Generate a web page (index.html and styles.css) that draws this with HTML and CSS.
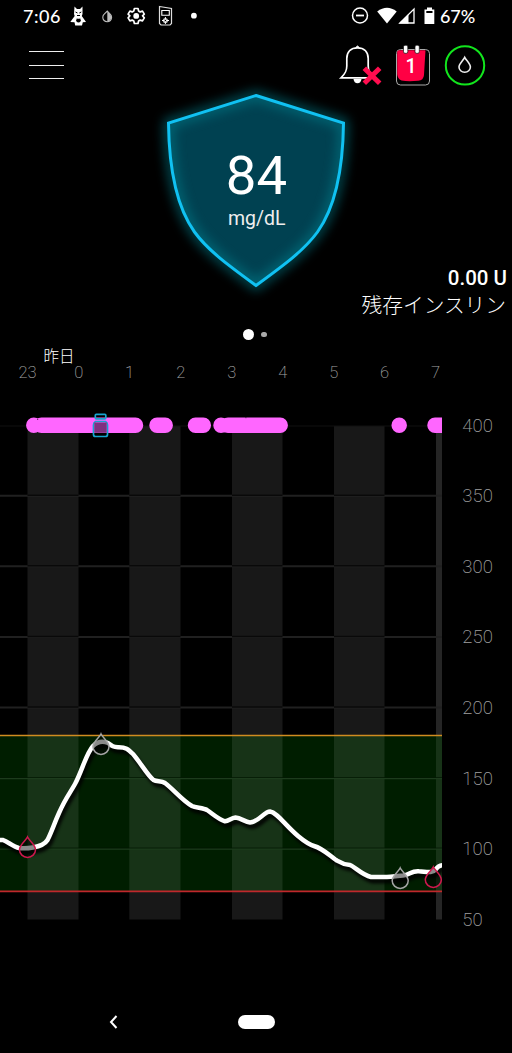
FILE: index.html
```html
<!DOCTYPE html>
<html lang="ja">
<head>
<meta charset="utf-8">
<title>Glucose</title>
<link rel="stylesheet" href="styles.css">
</head>
<body>
<div class="screen">
  <div class="status">
    <span class="clock">7:06</span>
    <svg class="status-icons" width="140" height="32" viewBox="66 0 140 32">
      <path d="M74.500 6.500L77 9H80L82.500 6.500V14L81.800 16L86 22L82.800 22.300L82 25.500H75.200L74.500 22.300L70.300 22L74.700 16L74 14Z" fill="#fff"/>
      <path d="M75.500 12L77.500 13M81.300 12L79.300 13M77 15.500H80" stroke="#000" stroke-width="1"/>
      <circle cx="78.500" cy="20.200" r="2.300"/>
      <path d="M78.500 17.200l1.600 1.500h-3.200z" fill="#fff"/>
      <path d="M107.300 11L110.200 14.200A4.400 4.400 0 1 1 104.200 14.200Z" fill="none" stroke="#bbb" stroke-width="1.100"/>
      <path d="M107.300 11L110.200 14.200A4.400 4.400 0 0 1 107.300 21.500Z" fill="#bbb"/>
      <path d="M134.400 8.500h3.600l.6 2.500 1.600.9 2.300-.8 1.800 3-1.800 1.700v0l1.800 2.100-1.800 3-2.300-.8-1.600.9-.6 2.500h-3.600l-.6-2.500-1.600-.9-2.300.8-1.800-3 1.800-2.100-1.800-1.700 1.800-3 2.300.8 1.600-.9z" fill="none" stroke="#fff" stroke-width="1.700" stroke-linejoin="round"/>
      <circle cx="136.200" cy="15.900" r="2.900" fill="#fff"/>
      <path d="M159.500 6.500L171.500 8.500V23.500L170 25H161L159.500 23.500Z" fill="none" stroke="#ddd" stroke-width="1.200"/>
      <path d="M161.800 10.500h7.500v4.800h-7.500z" fill="none" stroke="#fff" stroke-width="1.100"/>
      <circle cx="165.400" cy="20.500" r="2.600" fill="#bbb"/>
      <path d="M165.400 17v7M162 20.500h7" stroke="#fff"/>
      <circle cx="165.400" cy="20.500" r=".8"/>
      <circle cx="193.900" cy="15.700" r="2.900" fill="#fff"/>
    </svg>
    <svg class="status-signal" width="90" height="32" viewBox="350 0 90 32">
      <circle cx="360" cy="15.500" r="7.500" fill="none" stroke="#fff" stroke-width="1.500"/>
      <path d="M356 15.500h8" stroke="#fff" stroke-width="1.800"/>
      <path d="M377.200 11.500Q387 4 396.700 11.500L387 23.500Z" fill="#fff"/>
      <path d="M399.800 23H414V9Z" fill="none" stroke="#fff" stroke-width="1.300"/>
      <path d="M399 23.500L408.500 14V23.500Z" fill="#fff"/>
      <path d="M427 7.500h5v2h2.300V24H424.500V9.500H427Z" fill="#fff"/>
      <path d="M426.300 11h6.200v2h-6.200z"/>
    </svg>
    <span class="battery">67%</span>
  </div>

  <div class="toolbar">
    <div class="menu"><i></i><i></i><i></i></div>
    <svg width="150" height="48" viewBox="336 42 150 48">
      <path d="M341 77.800C345.500 73.500 346.800 71 346.800 66V58.500C346.800 51.500 351 47.800 357.500 47.800S368.200 51.500 368.200 58.500V66C368.200 71 369.500 73.500 374 77.800Z" fill="none" stroke="#fff" stroke-width="1.700"/>
      <path d="M355.800 47.500Q357.500 44.500 359.200 47.500Z" fill="#fff" stroke="#fff"/>
      <path d="M353.500 79h8q-.6 4.200-4 4.200t-4-4.200z" fill="#fff"/>
      <path d="M364.300 68.300L379.700 83.300M379.700 68.300L364.300 83.300" stroke="#ff0d4f" stroke-width="5"/>
      <rect x="396.500" y="49.500" width="33" height="35.500" rx="4" fill="#000" stroke="#aaa"/>
      <path d="M399 50.300H425.500Q424.500 66 424 75Q423.500 80.800 418 80.700Q408 81.700 401.500 80.400Q397.500 79 397.200 74V52Q397.200 50.300 399 50.300Z" fill="#ff0044"/>
      <rect x="403.500" y="45.300" width="4.300" height="8" rx="1.500" fill="#fff" stroke="#111" stroke-width=".7"/>
      <rect x="415" y="45.300" width="4.300" height="8" rx="1.500" fill="#fff" stroke="#111" stroke-width=".7"/>
      <text class="day" x="411" y="72.700">1</text>
      <circle cx="465" cy="65.400" r="19.200" fill="none" stroke="#12e51d" stroke-width="2"/>
      <path d="M464.700 57.300C463 60.800 459 63.800 459 67A5.700 5.300 0 0 0 470.400 67C470.400 63.800 466.500 60.800 464.700 57.300Z" fill="none" stroke="#eee" stroke-width="1.600"/>
    </svg>
  </div>

  <div class="hero">
    <svg class="shield" width="212" height="210" viewBox="150 90 212 210">
      <defs><filter id="glow" x="-20%" y="-20%" width="140%" height="140%"><feGaussianBlur stdDeviation="6"/></filter></defs>
      <path d="M256 95.500L343.500 123C343 168 336 206 317.500 232C304 250.500 284 265 256 285.500C228 265 208 250.500 194.500 232C176 206 169 168 168.500 123Z" fill="#004151"/>
      <path d="M256 95.500L343.500 123C343 168 336 206 317.500 232C304 250.500 284 265 256 285.500C228 265 208 250.500 194.500 232C176 206 169 168 168.500 123Z" fill="none" stroke="#008290" stroke-width="9" opacity=".65" filter="url(#glow)"/>
      <path d="M256 95.500L343.500 123C343 168 336 206 317.500 232C304 250.500 284 265 256 285.500C228 265 208 250.500 194.500 232C176 206 169 168 168.500 123Z" fill="none" stroke="#10c1f2" stroke-width="3"/>
      <text class="glucose" x="256.500" y="193.500">84</text>
      <text class="unit" x="256.800" y="224.500">mg/dL</text>
    </svg>
  </div>

  <div class="insulin">
    <div class="amount">0.00 U</div>
    <div class="caption">残存インスリン</div>
  </div>
  <div class="pager"><i class="current"></i><i></i></div>

  <svg class="chart" width="512" height="590" viewBox="0 342 512 590">
    <defs>
      <clipPath id="plot"><path d="M0 400H442V930H0Z"/></clipPath>
      <filter id="shade" x="-5%" y="-10%" width="110%" height="130%"><feGaussianBlur stdDeviation="1.700"/></filter>
      <path id="drop" d="M0-11.500C-1.500-8-8-4-8 1.200A8 7.700 0 0 0 8 1.200C8-4 1.500-8 0-11.500Z"/>
      <path id="trend" d="M-2 840L3 840C8 842 14 847 19 848C24 848.700 27 848.500 33 847.500C41 846 45 844 47.500 840C52 831 54 824 59 813C65 799 70 793 75 784C82 771 86 754 93 746C98 741 103 741 108 743C112 746 113 747 118 747.200C126 747 128 749 133 754C140 762 148 776 153.500 780C157 782 161 780.500 165 783C173 789 183 801 192 806C196 808 203 807.500 207 810C213 814 218 819 225 821.300C229 821 231 818 235.500 817.600C241 818 245 822 250 822.500C259 822 264 811.500 270 811.500C277 812.500 285 825 298 836C304 841 309 844.500 314 846C323 848.500 330 856 336 860C341 863 343 864.500 350 865C355 867 362 875 371 877H387C394 876.500 399 875.500 403 875.500C410 875 411 870.500 419 871.200C426 871.500 432 874 436 869C438 866 440 865 444 865"/>
    </defs>
    <path d="M27.500 426H78.500V919.500H27.500ZM129.300 426H180.500V919.500H129.300ZM232 426H282.500V919.500H232ZM334 426H384.500V919.500H334Z" fill="#181818"/>
    <path d="M436 426H442V919.500H436Z" fill="#252525"/>
    <path d="M0 426H442" stroke="#111"/>
    <path d="M0 495.700H442M0 566.300H442M0 637H442M0 707.600H442M0 778.300H442M0 849H442" stroke="#202020" stroke-width="2"/>
    <path d="M27.500 495.200h51m50.800 0h51.200m51.500 0h50.500m51.500 0h50.500M27.500 565.800h51m50.800 0h51.200m51.500 0h50.500m51.500 0h50.500M27.500 636.500h51m50.800 0h51.200m51.500 0h50.500m51.500 0h50.500M27.500 707.100h51m50.800 0h51.200m51.500 0h50.500m51.500 0h50.500" stroke="#090909" stroke-width="1.500"/>
    <path d="M0 736H442V891H0Z" fill="#001e00"/>
    <path d="M27.500 736h51v155h-51zM129.300 736h51.200v155h-51.200zM232 736h50.500v155H232zM334 736h50.500v155H334zM436 736h6v155h-6z" fill="#173317"/>
    <path d="M0 778.500H442M0 849H442" stroke="#1d3c1d" stroke-width="1.500"/>
    <path d="M0 777.500H442M0 848H442" stroke="#001500" stroke-width=".7"/>
    <path d="M0 735.600H442" stroke="#d08c20" stroke-width="1.500"/>
    <path d="M0 891.400H442" stroke="#c0282c" stroke-width="1.600"/>
    <g clip-path="url(#plot)">
      <use href="#trend" transform="translate(2 4)" fill="none" stroke="#000" stroke-width="5" opacity=".85" filter="url(#shade)"/>
      <use href="#trend" fill="none" stroke="#fff" stroke-width="4.500"/>
      <g class="meter grey"><use href="#drop" x="101" y="745.500"/><use href="#drop" x="400.200" y="879.500"/></g>
      <g class="meter red"><use href="#drop" x="27.500" y="848.500"/><use href="#drop" x="433.300" y="878.500"/></g>
      <path class="doses" d="M33.800 425.300h.01M41.500 425.300H135.500M157 425.300H165.200M195.500 425.300H203.300M221 425.300h.01M228 425.300H280.200M399.200 425.300h.01M435 425.300H450"/>
      <path d="M37.400 418.500l1 1.200-1 .2zM245.500 417l1.200 1-1 .2z"/>
    </g>
    <g class="vial">
      <rect x="95.300" y="414.300" width="10.500" height="4.500" rx="1"/>
      <path d="M95.500 421.500H105.500Q107.500 422.500 107.500 425V434.500Q107.500 436.500 105.500 436.500H95.500Q93.500 436.500 93.500 434.500V425Q93.500 422.500 95.500 421.500Z"/>
      <path class="liquid" d="M94.300 422.500H106.700V432.800H94.300Z"/>
    </g>
    <text class="yesterday" x="59" y="361.800">昨日</text>
    <g class="hours">
      <text x="27.500" y="377.800">23</text><text x="78.700" y="377.800">0</text><text x="129.500" y="377.800">1</text><text x="180.700" y="377.800">2</text><text x="231.700" y="377.800">3</text><text x="282.700" y="377.800">4</text><text x="333.800" y="377.800">5</text><text x="384.500" y="377.800">6</text><text x="435.500" y="377.800">7</text>
    </g>
    <g class="levels">
      <text x="462.300" y="431.500">400</text><text x="462.300" y="502">350</text><text x="462.300" y="572.700">300</text><text x="462.300" y="643.300">250</text><text x="462.300" y="714">200</text><text x="462.300" y="784.500">150</text><text x="462.300" y="855">100</text><text x="462.300" y="925.800">50</text>
    </g>
  </svg>

  <div class="navbar">
    <svg width="10" height="16" viewBox="0 0 10 16"><path d="M8.500 2L3 8L8.500 14" fill="none" stroke="#fff" stroke-width="2"/></svg>
    <span class="home"></span>
  </div>
</div>
</body>
</html>
```

FILE: styles.css
```css
body { margin: 0; background: #000; }
svg { display: block; flex: none; }
.screen {
  width: 512px;
  height: 1053px;
  overflow: hidden;
  display: flex;
  flex-direction: column;
  background: #000;
  color: #fff;
  font-family: Roboto, "Noto Sans CJK JP", sans-serif;
}
.status {
  height: 32px;
  display: flex;
  align-items: center;
  font: 500 18px/32px Lato, sans-serif;
}
.clock { width: 43px; padding-left: 23px; letter-spacing: .55px; }
.status-signal { margin-left: 144px; }
.battery { letter-spacing: -.1px; }
.toolbar {
  height: 48px;
  padding: 10px 26px 0 29px;
  display: flex;
  justify-content: space-between;
}
.menu {
  width: 35px;
  padding-top: 9px;
  display: flex;
  flex-direction: column;
  gap: 12.500px;
}
.menu i { height: 1px; background: #eee; }
.day { font: 500 19.500px Roboto, sans-serif; fill: #fff; text-anchor: middle; }
.hero { height: 175px; display: flex; padding-left: 150px; }
.shield { overflow: visible; }
.glucose { font: 400 54.500px Roboto, sans-serif; fill: #fff; text-anchor: middle; }
.unit { font: 400 19.500px Roboto, sans-serif; fill: #eee; text-anchor: middle; }
.insulin { height: 64px; text-align: right; }
.amount { padding-right: 5px; font-size: 20.500px; line-height: 26px; font-weight: 500; }
.caption { padding: 1px 6px 0 0; font-size: 20.700px; line-height: 28px; font-weight: 300; }
.pager { height: 11px; padding-bottom: 2px; display: flex; align-items: center; gap: 7px; padding-left: 242.500px; }
.pager i { width: 5.500px; height: 5.500px; border-radius: 50%; background: #aaa; }
.pager .current { width: 11.500px; height: 11.500px; background: #fff; }
.yesterday { font: 300 15.500px "Noto Sans CJK JP", sans-serif; fill: #fff; text-anchor: middle; }
.hours { font: 200 16.500px Roboto, sans-serif; fill: #a0a0a0; text-anchor: middle; }
.levels { font: 200 18.500px Roboto, sans-serif; fill: #a0a0a0; }
.meter { fill: rgba(0, 0, 0, .46); stroke-width: 1.500; }
.grey { stroke: #a5a5a5; }
.red { stroke: #d0184e; }
.doses { stroke: #ff66ff; stroke-width: 15.500; stroke-linecap: round; fill: none; }
.vial { fill: none; stroke: #16a5d0; stroke-width: 1.700; }
.vial .liquid { fill: #803080; stroke: none; }
.navbar { height: 121px; box-sizing: border-box; padding: 59px 0 0 108px; display: flex; align-items: center; gap: 120px; }
.home { width: 37px; height: 14px; border-radius: 7px; background: #fff; }
```
